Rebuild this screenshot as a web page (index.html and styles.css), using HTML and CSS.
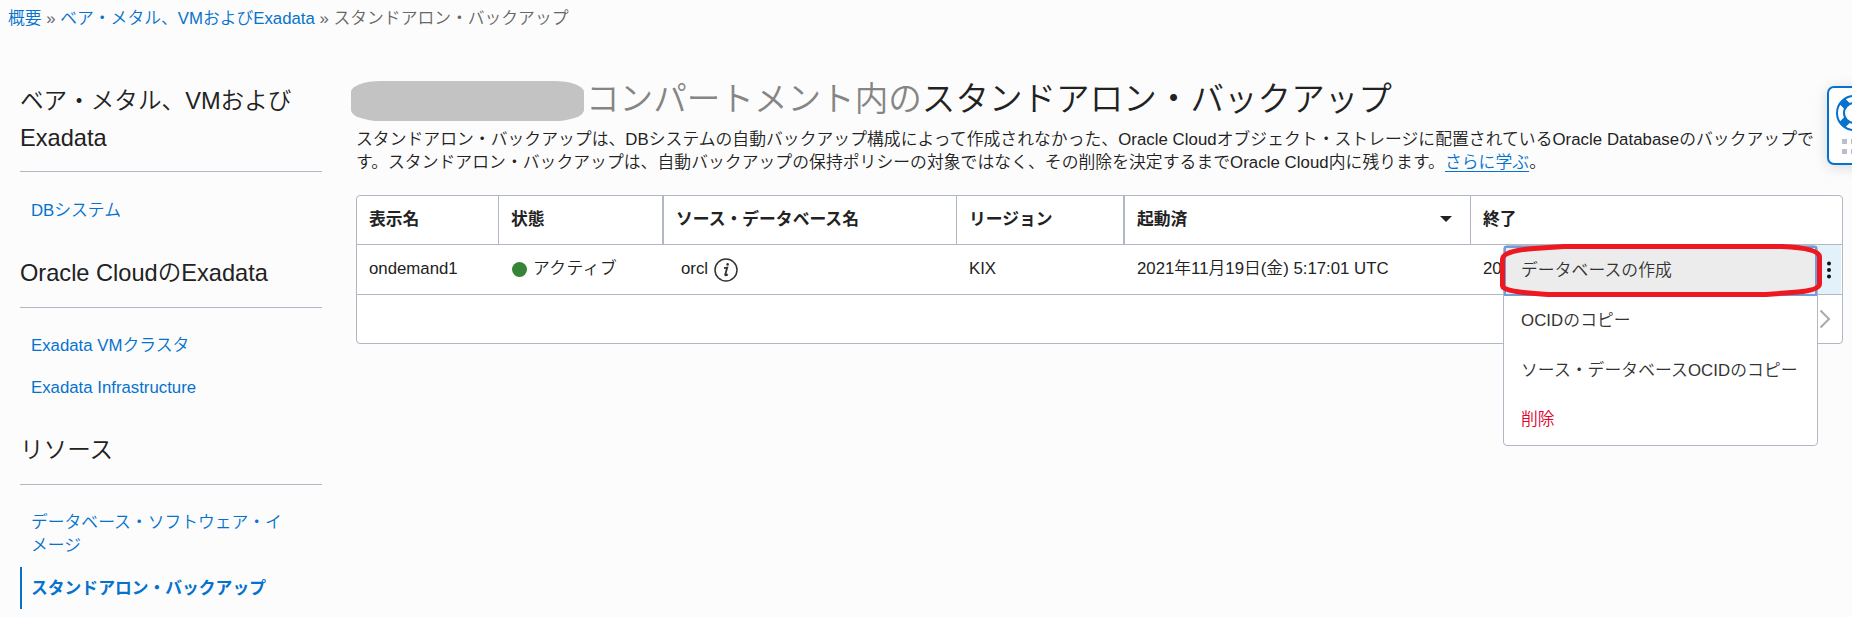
FILE: index.html
```html
<!DOCTYPE html>
<html lang="ja">
<head>
<meta charset="utf-8">
<title>スタンドアロン・バックアップ</title>
<link rel="stylesheet" href="styles.css">
</head>
<body>
<nav class="breadcrumb"><a href="#">概要</a> » <a href="#">ベア・メタル、VMおよびExadata</a> » <span>スタンドアロン・バックアップ</span></nav>
<div class="layout">
  <aside class="sidebar">
    <h2 class="side-title two-line">ベア・メタル、VMおよび<br>Exadata</h2>
    <a class="side-link" href="#">DBシステム</a>
    <h2 class="side-title">Oracle CloudのExadata</h2>
    <a class="side-link" href="#">Exadata VMクラスタ</a>
    <a class="side-link" href="#">Exadata Infrastructure</a>
    <h2 class="side-title">リソース</h2>
    <a class="side-link" href="#">データベース・ソフトウェア・イ<br>メージ</a>
    <a class="side-link active" href="#">スタンドアロン・バックアップ</a>
  </aside>
  <main class="main">
    <h1 class="title"><span class="redacted"></span><span class="muted">コンパートメント内の</span><span class="page-name">スタンドアロン・バックアップ</span></h1>
    <p class="description"><span class="line first">スタンドアロン・バックアップは、DBシステムの自動バックアップ構成によって作成されなかった、Oracle Cloudオブジェクト・ストレージに配置されているOracle Databaseのバックアップで</span><span class="line">す。スタンドアロン・バックアップは、自動バックアップの保持ポリシーの対象ではなく、その削除を決定するまでOracle Cloud内に残ります。<a href="#">さらに学ぶ</a>。</span></p>
    <div class="table">
      <div class="row head">
        <div class="cell">表示名</div>
        <div class="cell wide-rule">状態</div>
        <div class="cell">ソース・データベース名</div>
        <div class="cell wide-rule">リージョン</div>
        <div class="cell sorted">起動済<svg class="caret" viewBox="0 0 12 6"><path d="M0 0h12L6 6z"/></svg></div>
        <div class="cell">終了</div>
      </div>
      <div class="row">
        <div class="cell">ondemand1</div>
        <div class="cell"><span class="dot"></span><span class="status">アクティブ</span></div>
        <div class="cell source">orcl<svg class="info" viewBox="0 0 24 24"><circle cx="12" cy="12" r="11"/><path class="stem" d="M10 10.2l3.2-.6-2 7.2q-.3 1.3 2.6-.4"/><circle class="point" cx="13.6" cy="6.4" r="1.3"/></svg></div>
        <div class="cell">KIX</div>
        <div class="cell">2021年11月19日(金) 5:17:01 UTC</div>
        <div class="cell">20<button class="actions" aria-label="アクション"><svg viewBox="0 0 24 48"><circle cx="12" cy="17.500" r="2"/><circle cx="12" cy="24" r="2"/><circle cx="12" cy="30.500" r="2"/></svg></button></div>
      </div>
      <div class="footer"><svg class="next" viewBox="0 0 12 20"><path d="M1.500 1.500L10 10l-8.500 8.500"/></svg></div>
      <div class="menu">
        <div class="item focused">データベースの作成</div>
        <div class="item">OCIDのコピー</div>
        <div class="item">ソース・データベースOCIDのコピー</div>
        <div class="item danger">削除</div>
        <svg class="marker" viewBox="0 0 324 54"><path d="M34 4.500L64 2.500H282Q319.500 4 319.500 13V40Q319 46 298 48L266 50.500H48Q3 48 2.500 42V15Q2.500 7 34 4.500Z"/></svg>
      </div>
    </div>
  </main>
</div>
<div class="support">
  <svg viewBox="0 0 48 76"><circle class="ring" cx="25" cy="25" r="17"/><circle class="ring" cx="25" cy="25" r="10"/><path class="bands" d="M13.500 13.500l4.500 4.500M36.500 13.500l-4.500 4.500M13.500 36.500l4.500-4.500M36.500 36.500l-4.500-4.500"/><path class="grip" d="M13 51h5v5h-5zM22 51h5v5h-5zM31 51h5v5h-5zM13 61h5v5h-5zM22 61h5v5h-5zM31 61h5v5h-5z"/></svg>
</div>
</body>
</html>
```
FILE: styles.css
```css
* { box-sizing: border-box; }
body {
  margin: 0;
  height: 617px;
  overflow: hidden;
  background: #fcfcfc;
  color: #222;
  font: 350 16.8px/23px "Liberation Sans", "Noto Sans CJK JP", sans-serif;
  white-space: nowrap;
}
a { color: #0572ce; text-decoration: none; }
.breadcrumb { height: 62px; padding: 7px 8px 0; color: #666; }
.layout { display: flex; }
.sidebar { width: 302px; margin-left: 20px; padding-top: 21px; flex: none; }
.side-title {
  margin: 0 0 16px;
  padding-bottom: 15px;
  border-bottom: 1px solid #b1b7c3;
  font-size: 23.6px;
  line-height: 37px;
  font-weight: 350;
}
.side-title.two-line { margin-bottom: 17px; padding-bottom: 14px; }
.side-link { display: block; padding: 10px 0 9px 11px; }
.side-link + .side-title { margin-top: 24px; }
.side-link.active { margin-top: 1px; padding-left: 9px; border-left: 2px solid #0572ce; font-weight: 700; }
.main { margin-left: 29px; width: 1492px; padding-top: 14px; }
.title {
  display: flex;
  align-items: center;
  height: 52px;
  margin: 0;
  font-size: 33.6px;
  line-height: 44px;
  font-weight: 350;
}
.redacted { width: 233px; height: 40px; margin: 0 2px 3px 0; border-radius: 30px / 11px; background: #c3c3c3; }
.muted, .page-name { padding-bottom: 5px; }
.muted { color: #858585; }
.description { margin: 0 0 21px 5px; letter-spacing: .06px; }
.line { display: block; }
.first { letter-spacing: .05px; }
.description a { text-decoration: underline; text-underline-offset: 3px; }
.table { position: relative; width: 1487px; height: 149px; margin-left: 5px; border: 1px solid #b1b7c3; border-radius: 4px; background: #fff; }
.row { display: grid; grid-template-columns: 142px 165px 293px 168px 346px 1fr; height: 50px; border-bottom: 1px solid #b1b7c3; }
.head { height: 49px; font-weight: 700; }
.cell { display: flex; align-items: center; padding: 0 12px 3px; }
.head .cell { border-right: 1px solid #b1b7c3; padding-bottom: 2px; }
.head .cell.wide-rule { border-right-width: 2px; }
.head .cell:last-child { border-right: 0; }
.sorted { justify-content: space-between; }
.head .sorted { padding-right: 18px; }
.caret { width: 12px; height: 6px; fill: #222; }
.dot { width: 15px; height: 15px; margin: 3px 6px 0 1px; border-radius: 50%; background: #358437; }
.status { letter-spacing: .4px; }
.cell.source { padding-left: 17px; }
.info { width: 24px; height: 24px; margin: 4px 0 0 6px; fill: none; stroke: #333; stroke-width: 1.5; }
.info .stem { stroke-width: 1.8; }
.info .point { fill: #333; stroke: none; }
.actions { width: 24px; height: 49px; margin: 0 -11px -3px auto; padding: 0; border: 0; background: #e3f1fb; }
.actions svg { display: block; width: 24px; height: 48px; fill: #111; }
.footer { display: flex; height: 48px; align-items: center; justify-content: flex-end; padding-right: 11px; }
.next { width: 12px; height: 20px; fill: none; stroke: #aaa; stroke-width: 2; }
.menu { position: absolute; left: 1146px; top: 49px; width: 315px; height: 201px; border: 1px solid #b1b7c3; border-radius: 4px; background: #fff; color: #333; letter-spacing: .08px; }
.item { height: 50px; padding: 13px 0 0 17px; }
.item.focused { padding: 11px 0 0 15px; border: 2px solid #6d9fe0; background: #ececec; }
.item.danger { color: #e5002b; padding-top: 12px; }
.marker { position: absolute; left: -4px; top: -2px; width: 324px; height: 54px; fill: none; stroke: #ef1820; stroke-width: 5; }
.support { position: absolute; left: 1827px; top: 86px; width: 60px; height: 79px; border: 2px solid #0572ce; border-radius: 7px; background: #fff; box-shadow: 0 2px 14px rgba(0, 0, 0, .15); }
.support svg { display: block; width: 48px; height: 76px; }
.ring { fill: none; stroke: #0572ce; stroke-width: 2; }
.bands { stroke: #0572ce; stroke-width: 8; }
.grip { fill: #b9bec8; }
```
